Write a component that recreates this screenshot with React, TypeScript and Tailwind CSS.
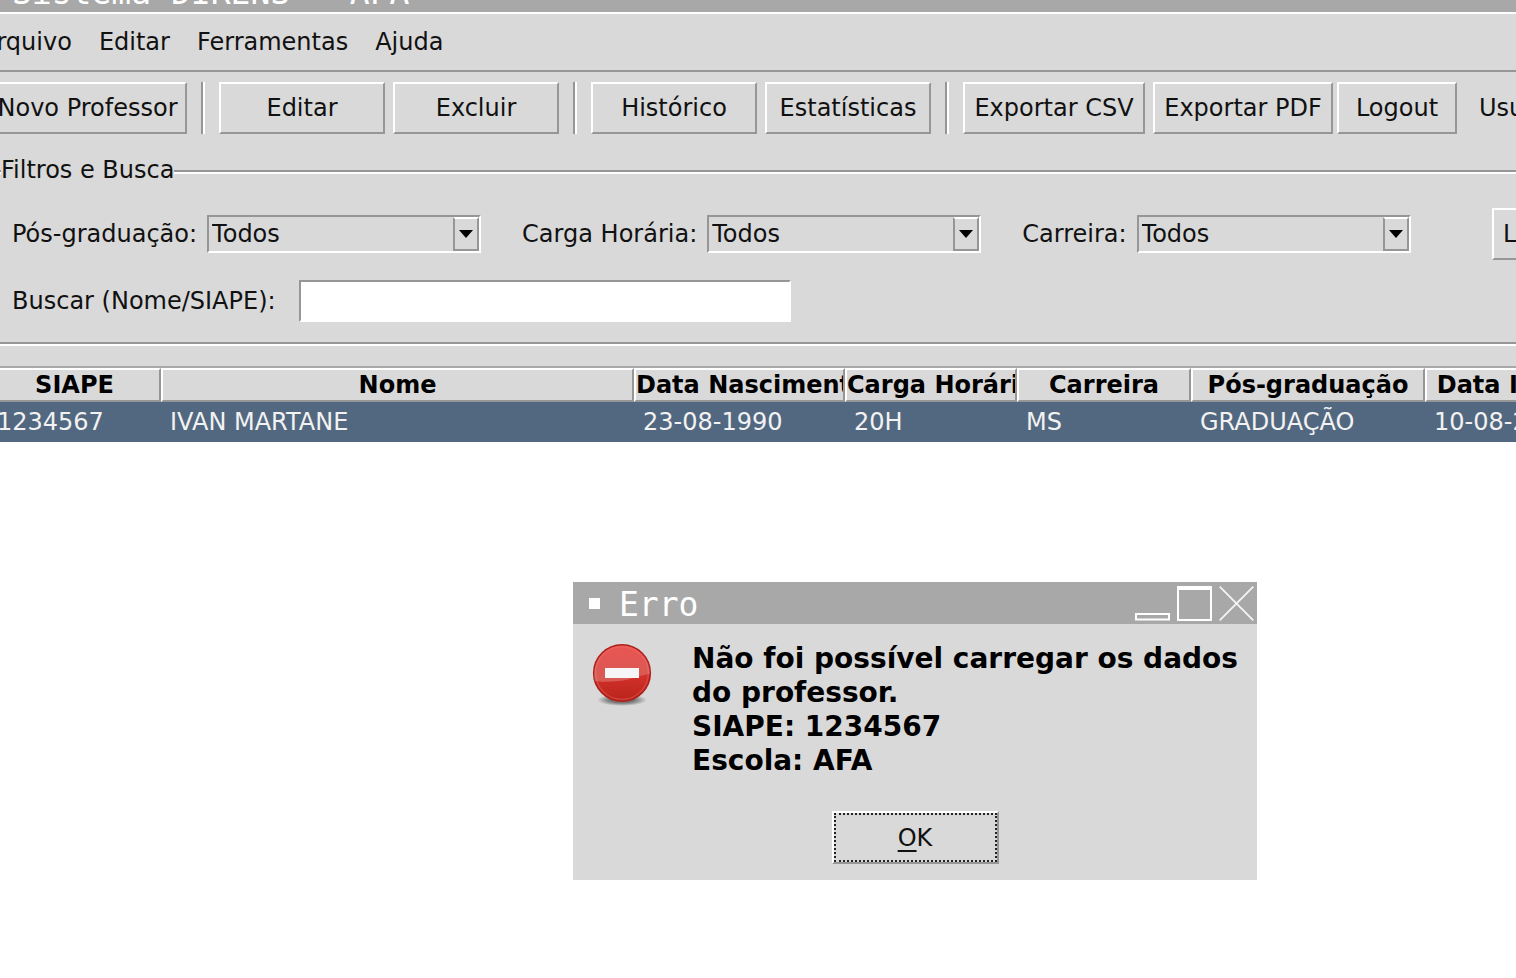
import type { ReactNode } from 'react';

const raised = 'border-2 border-t-white border-l-white border-b-[#969696] border-r-[#969696] bg-[#d9d9d9]';
const sunken = 'border-2 border-t-[#969696] border-l-[#969696] border-b-white border-r-white';

function TitleBar({ title }: { title: string }) {
  return (
    <div className="flex h-[42px] items-center bg-[#a8a8a8] pl-4 pr-[3px] text-white">
      <span className="size-[11px] bg-white" />
      <h2 className="ml-[19px] flex-1 pt-[3px] font-['DejaVu_Sans_Mono',monospace] text-[33px] leading-[38px]">{title}</h2>
      <div className="flex gap-[7px]">
        <button type="button" aria-label="Minimizar">
          <svg width="35" height="35" viewBox="0 0 35 35" fill="none" stroke="#fff" strokeWidth="2">
            <rect x="1" y="28" width="33" height="5.5" />
          </svg>
        </button>
        <button type="button" aria-label="Maximizar">
          <svg width="35" height="35" viewBox="0 0 35 35" fill="none" stroke="#fff" strokeWidth="2">
            <rect x="1" y="1" width="33" height="33" />
            <path d="M1 2.5h33" strokeWidth="3" />
          </svg>
        </button>
        <button type="button" aria-label="Fechar">
          <svg width="35" height="35" viewBox="0 0 35 35" fill="none" stroke="#f4f4f4" strokeWidth="1.8">
            <path d="M.7.7l33.6 33.6M34.3.7L.7 34.3" />
          </svg>
        </button>
      </div>
    </div>
  );
}

function ToolButton({ width, children }: { width: string; children: ReactNode }) {
  return (
    <button type="button" className={`${raised} ${width} h-[52px] shrink-0 whitespace-nowrap text-center`}>
      {children}
    </button>
  );
}

function Separator() {
  return <span className="mx-[14px] h-[52px] w-1 shrink-0 border-x-2 border-l-[#969696] border-r-white" />;
}

function Filter({ id, label }: { id: string; label: string }) {
  return (
    <div className="flex shrink-0 items-center">
      <label htmlFor={id} className="mr-[10px] whitespace-nowrap">{label}</label>
      <div className="relative">
        <select id={id} className={`${sunken} block h-[38px] w-[274px] appearance-none rounded-none bg-[#d9d9d9] pl-[3px] leading-[28px]`}>
          <option>Todos</option>
        </select>
        <span className="pointer-events-none absolute top-[2px] right-[2px] flex h-[34px] w-[26px] items-center justify-center border-2 border-[#969696] border-t-white bg-[#d9d9d9]">
          <svg width="14" height="8" viewBox="0 0 14 8">
            <path d="M0 0h14L7 8z" fill="#000" />
          </svg>
        </span>
      </div>
    </div>
  );
}

const columns = [
  { title: 'SIAPE', width: 'w-[173px]', align: 'text-center', value: '1234567' },
  { title: 'Nome', width: 'w-[473px]', align: 'text-center', value: 'IVAN MARTANE' },
  { title: 'Data Nascimento', width: 'w-[211px]', align: 'text-left', value: '23-08-1990' },
  { title: 'Carga Horária', width: 'w-[172px]', align: 'text-left', value: '20H' },
  { title: 'Carreira', width: 'w-[174px]', align: 'text-center', value: 'MS' },
  { title: 'Pós-graduação', width: 'w-[234px]', align: 'text-center', value: 'GRADUAÇÃO' },
  { title: 'Data Ingresso', width: 'w-[212px]', align: 'text-center', value: '10-08-2015' },
];

function ErrorIcon() {
  return (
    <svg width="60" height="64" viewBox="0 0 60 64" className="shrink-0">
      <defs>
        <linearGradient id="disc" x1="0" y1="0" x2="0" y2="1">
          <stop offset="0" stopColor="#ea4c4a" />
          <stop offset="0.6" stopColor="#cf2f28" />
          <stop offset="1" stopColor="#b8241c" />
        </linearGradient>
        <linearGradient id="gloss" x1="0" y1="0" x2="0" y2="1">
          <stop offset="0" stopColor="#fff" stopOpacity="0.06" />
          <stop offset="1" stopColor="#fff" stopOpacity="0.22" />
        </linearGradient>
        <radialGradient id="shade">
          <stop offset="0.5" stopColor="#000" stopOpacity="0.45" />
          <stop offset="1" stopColor="#000" stopOpacity="0" />
        </radialGradient>
      </defs>
      <ellipse cx="30" cy="57" rx="25" ry="6" fill="url(#shade)" />
      <circle cx="30" cy="30" r="28.3" fill="url(#disc)" stroke="#ad211b" strokeWidth="1.6" />
      <circle cx="30" cy="30" r="26.4" fill="none" stroke="#e8605a" strokeOpacity="0.55" strokeWidth="1.2" />
      <rect x="13" y="25" width="34" height="10" fill="#f4f4f4" />
      <path d="M3 38A28 28 0 1 1 58 31C46 32 40 37 26 38 17 39 9 39 3 38Z" fill="url(#gloss)" />
    </svg>
  );
}

export default function App() {
  return (
    <div className="relative h-screen overflow-hidden bg-white font-['DejaVu_Sans',sans-serif] text-[24px] leading-[28px] text-[#111]">
      <main className="-mt-[30px] -ml-[34px] min-w-[1740px]">
        <TitleBar title="Sistema DIRENS - AFA" />
        <div className="bg-[#d9d9d9]">
          <nav className="flex h-[60px] items-center gap-[27px] border-y-2 border-t-white border-b-[#969696] pl-[14px]">
            <button type="button">Arquivo</button>
            <button type="button">Editar</button>
            <button type="button">Ferramentas</button>
            <button type="button">Ajuda</button>
          </nav>

          <div className="flex items-center pt-[10px] pl-[22px]">
            <ToolButton width="w-[199px]">Novo Professor</ToolButton>
            <Separator />
            <div className="flex gap-2">
              <ToolButton width="w-[166px]">Editar</ToolButton>
              <ToolButton width="w-[166px]">Excluir</ToolButton>
            </div>
            <Separator />
            <div className="flex gap-2">
              <ToolButton width="w-[166px]">Histórico</ToolButton>
              <ToolButton width="w-[166px]">Estatísticas</ToolButton>
            </div>
            <Separator />
            <div className="flex gap-2">
              <ToolButton width="w-[182px]">Exportar CSV</ToolButton>
              <ToolButton width="w-[180px]">Exportar PDF</ToolButton>
            </div>
            <div className="ml-1 flex items-center gap-[22px]">
              <ToolButton width="w-[120px]">Logout</ToolButton>
              <span>Usuário:</span>
            </div>
          </div>

          <fieldset className="mt-[22px] ml-[22px]">
            <legend className="flex w-full items-center">
              <span className="mt-1 h-1 w-[13px] border-y-2 border-t-[#969696] border-b-white" />
              <span>Filtros e Busca</span>
              <span className="mt-1 h-1 flex-1 border-y-2 border-t-[#969696] border-b-white" />
            </legend>
            <div className="flex items-center gap-[41px] pt-6 pl-6">
              <Filter id="pos" label="Pós-graduação:" />
              <Filter id="carga" label="Carga Horária:" />
              <Filter id="carreira" label="Carreira:" />
              <div className="ml-10">
                <ToolButton width="w-[106px]">Limpar</ToolButton>
              </div>
            </div>
            <div className="flex items-center gap-[23px] py-5 pl-6">
              <label htmlFor="busca">Buscar (Nome/SIAPE):</label>
              <input id="busca" type="text" className={`${sunken} h-[42px] w-[492px] bg-white px-1 outline-none`} />
            </div>
            <div className="h-1 border-y-2 border-t-[#969696] border-b-white" />
          </fieldset>

          <div className="pt-5 pl-[22px]">
            <table className="w-[1649px] table-fixed border-separate border-spacing-0 border-t-2 border-[#a8a8a8]">
              <thead>
                <tr>
                  {columns.map((c) => (
                    <th key={c.title} className={`${raised} ${c.width} ${c.align} h-[34px] p-0 leading-[30px] font-bold whitespace-nowrap text-black`}>
                      <span className="block overflow-hidden">{c.title}</span>
                    </th>
                  ))}
                </tr>
              </thead>
              <tbody>
                <tr className="bg-[#526880] text-[#f2f2f2]">
                  {columns.map((c) => (
                    <td key={c.title} className="h-10 px-[9px] py-0 whitespace-nowrap">{c.value}</td>
                  ))}
                </tr>
              </tbody>
            </table>
          </div>
        </div>
      </main>

      <section role="dialog" aria-label="Erro" className="absolute top-[582px] left-[573px] w-[684px] bg-[#d9d9d9]">
        <TitleBar title="Erro" />
        <div className="flex gap-10 pt-[18px] pl-[19px]">
          <div className="pt-px">
            <ErrorIcon />
          </div>
          <p className="text-[28px] leading-[34px] font-bold whitespace-nowrap text-black">
            Não foi possível carregar os dados
            <br />
            do professor.
            <br />
            SIAPE: 1234567
            <br />
            Escola: AFA
          </p>
        </div>
        <div className="flex justify-center pt-[33px] pb-4">
          <button type="button" className={`${raised} h-[53px] w-[167px]`}>
            <span className="flex h-full items-center justify-center border-2 border-dotted border-[#222]">
              <span>
                <span className="underline decoration-2 underline-offset-4">O</span>K
              </span>
            </span>
          </button>
        </div>
      </section>
    </div>
  );
}
